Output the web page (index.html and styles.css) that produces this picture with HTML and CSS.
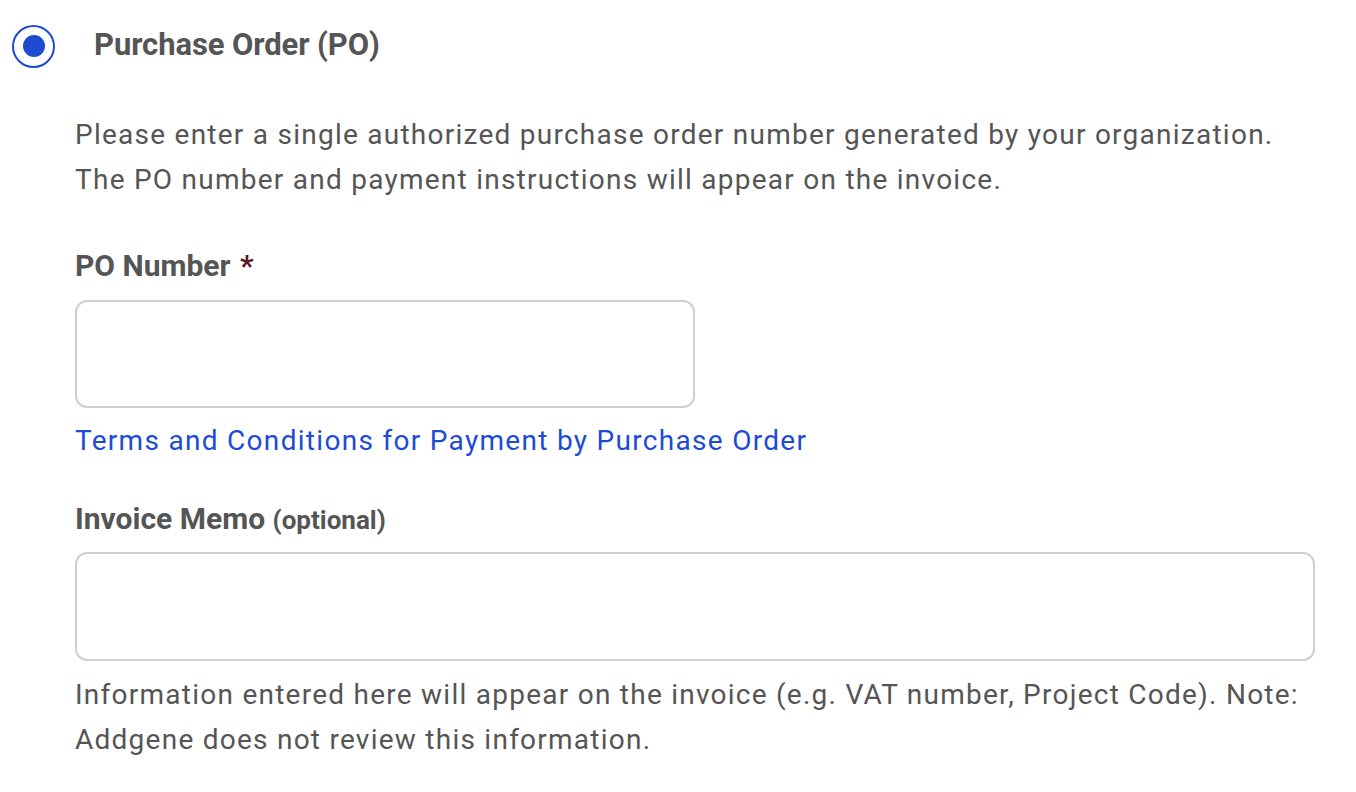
FILE: index.html
```html
<!DOCTYPE html>
<html>
<head>
<meta charset="utf-8">
<link rel="stylesheet" href="styles.css">
</head>
<body>
<div class="option">
  <div class="option-header">
    <span class="radio"><span class="radio-dot"></span></span>
    <span class="option-title">Purchase Order (PO)</span>
  </div>
  <div class="option-body">
    <p class="desc">Please enter a single authorized purchase order number generated by your organization.<br>The PO number and payment instructions will appear on the invoice.</p>
    <label class="field-label label-po">PO Number <span class="req">*</span></label>
    <div class="input input-po"></div>
    <a class="link" href="#">Terms and Conditions for Payment by Purchase Order</a>
    <label class="field-label label-memo">Invoice Memo <span class="opt">(optional)</span></label>
    <div class="input input-memo"></div>
    <p class="help">Information entered here will appear on the invoice (e.g. VAT number, Project Code). Note: Addgene does not review this information.</p>
  </div>
</div>
</body>
</html>
```
FILE: styles.css
```css
html, body {
  margin: 0;
  padding: 0;
  background: #ffffff;
}
body {
  font-family: Roboto, "Liberation Sans", sans-serif;
  color: #555555;
}
.option-header {
  display: flex;
  align-items: center;
  height: 92px;
  padding-left: 12px;
}
.radio {
  width: 43px;
  height: 43px;
  box-sizing: border-box;
  border: 2px solid #1f4bd2;
  border-radius: 50%;
  display: flex;
  align-items: center;
  justify-content: center;
}
.radio-dot {
  width: 22px;
  height: 22px;
  border-radius: 50%;
  background: #1f4bd2;
}
.option-title {
  margin-left: 39px;
  margin-bottom: 3px;
  font-size: 31px;
  font-weight: 700;
  letter-spacing: -0.1px;
  color: #555555;
}
.option-body {
  padding-left: 75px;
  padding-right: 41px;
  display: flex;
  flex-direction: column;
  align-items: flex-start;
}
.desc {
  margin: 20px 0 0 0;
  font-size: 28px;
  line-height: 45px;
  letter-spacing: 1.25px;
}
.field-label {
  font-size: 30px;
  font-weight: 700;
  line-height: 45px;
  display: block;
}
.label-po {
  margin-top: 41px;
}
.label-memo {
  margin-top: 33px;
}
.req {
  color: #5a1a1e;
  margin-left: 2px;
}
.opt {
  font-size: 26px;
}
.input {
  box-sizing: border-box;
  height: 108px;
  border: 2px solid #cfcfcf;
  border-radius: 12px;
  background: #fff;
  margin-top: 12px;
}
.input-po {
  width: 620px;
}
.input-memo {
  width: 100%;
  margin-top: 9px;
  height: 109px;
}
.link {
  margin-top: 10px;
  font-size: 28px;
  line-height: 45px;
  letter-spacing: 1.3px;
  color: #1d4bd6;
  text-decoration: none;
}
.help {
  margin: 11px 0 0 0;
  font-size: 28px;
  line-height: 45px;
  letter-spacing: 1.25px;
}
```
